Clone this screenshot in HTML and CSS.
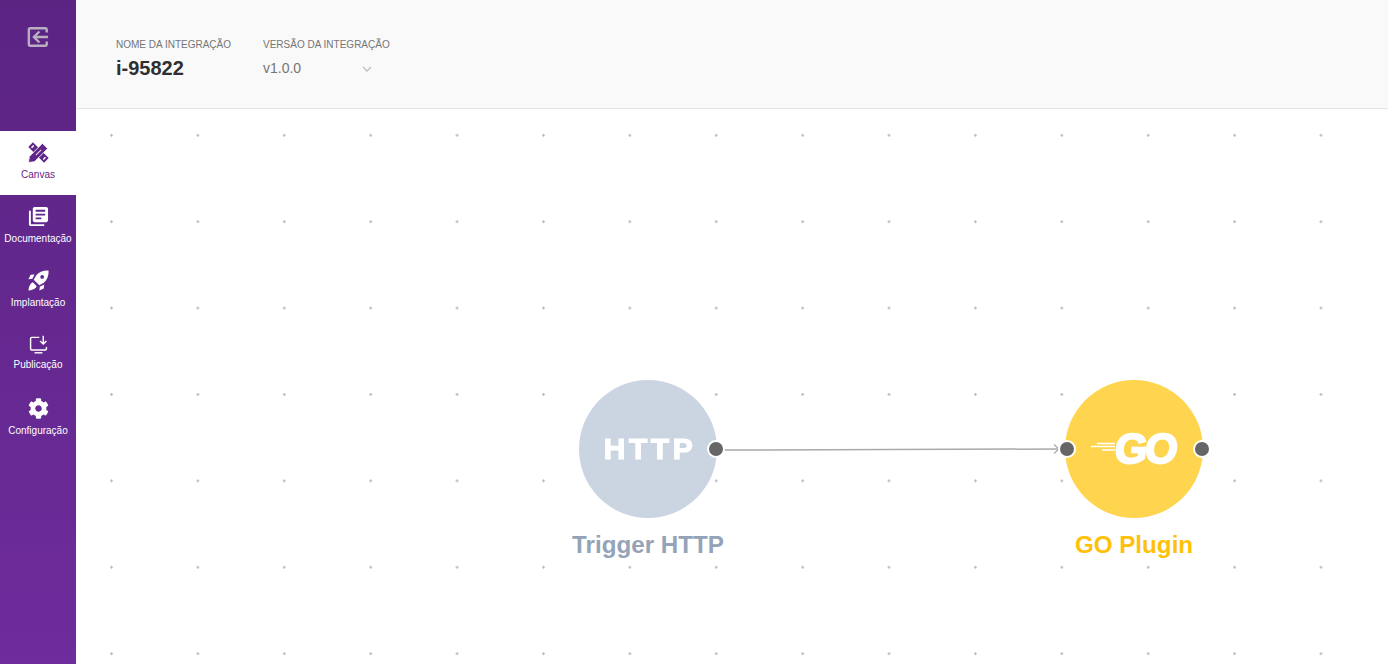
FILE: index.html
```html
<!DOCTYPE html>
<html lang="pt-BR">

<head>
    <meta charset="UTF-8">
    <meta name="viewport" content="width=device-width, initial-scale=1.0">
    <title>Canvas</title>
    <link rel="stylesheet" href="styles.css">
</head>

<body>
    <aside class="sidebar">
        <div class="sidebar-top">
            <svg class="back-icon" viewBox="0 0 24 24" fill="none" stroke="currentColor" stroke-width="2.600">
                <path d="M21.500 7V4a1.500 1.500 0 0 0-1.500-1.500H3.500A1.500 1.500 0 0 0 2 4v16a1.500 1.500 0 0 0 1.500 1.500H20a1.500 1.500 0 0 0 1.500-1.500v-3" />
                <path d="M23 12H8M13.500 6 7.500 12l6 6" />
            </svg>
        </div>
        <nav class="menu">
            <a class="menu-item active">
                <svg class="menu-icon" viewBox="0 0 24 24">
                    <path d="M3 3 21 21" stroke="currentColor" stroke-width="7.500" />
                    <path d="M4 6.500 6.500 4M17.500 20 20 17.500" stroke="#fff" stroke-width="1.800" />
                    <path d="M.5 23.500 1.500 16.500 16.500 1.500 22.500 7.500 7.500 22.500z" fill="currentColor" stroke="#fff" stroke-width="1" />
                    <path d="M9 15 15 9" stroke="#e6dcee" stroke-width="1.200" />
                </svg>
                <span>Canvas</span>
            </a>
            <a class="menu-item">
                <svg class="menu-icon" viewBox="1 1 22 22" fill="currentColor">
                    <path d="M4 6H2v14c0 1.100.9 2 2 2h14v-2H4V6zm16-4H8c-1.100 0-2 .9-2 2v12c0 1.100.9 2 2 2h12c1.100 0 2-.9 2-2V4c0-1.100-.9-2-2-2zm-1 9H9V9h10v2zm-4 4H9v-2h6v2zm4-8H9V5h10v2z" />
                </svg>
                <span>Documentação</span>
            </a>
            <a class="menu-item">
                <svg class="menu-icon" viewBox="0 0 24 24" fill="currentColor">
                    <path fill-rule="evenodd" d="M23.500.5c-6-.3-11 1.500-14 5.500L6.500 11 13 17.500l5-3c4-3 5.800-8 5.500-14zM16.200 5.700a2.200 2.200 0 1 1 0 4.400 2.200 2.200 0 0 1 0-4.400z" />
                    <path d="M7.500 5 3 5.500.5 10.500l4.500-.5zM18.500 16.500l-.5 4.500-5 2.500.5-4.500zM5.500 14c-2.500 1-4.500 4-5 9.500 5.500-.5 8.500-2.500 9.500-5z" />
                </svg>
                <span>Implantação</span>
            </a>
            <a class="menu-item publish">
                <svg class="menu-icon" viewBox="0 0 24 24" fill="none" stroke="currentColor" stroke-width="1.800">
                    <path d="M13 3H3.500A1.500 1.500 0 0 0 2 4.500v13A1.500 1.500 0 0 0 3.500 19h17a1.500 1.500 0 0 0 1.500-1.500V15" />
                    <path d="M7 22.500h10" />
                    <path d="M18 1v9.500M14 7.500l4 4 4-4" />
                </svg>
                <span>Publicação</span>
            </a>
            <a class="menu-item">
                <svg class="menu-icon" viewBox="0 0 512 512" fill="currentColor">
                    <path d="M487.4 315.7l-42.6-24.6c4.3-23.2 4.3-47 0-70.2l42.6-24.6c4.9-2.8 7.1-8.6 5.5-14-11.1-35.6-30-67.8-54.7-94.6-3.8-4.100-10-5.100-14.800-2.300L380.800 110c-17.900-15.400-38.500-27.300-60.800-35.100V25.800c0-5.600-3.900-10.500-9.400-11.700-36.700-8.200-74.300-7.800-109.200 0-5.500 1.200-9.400 6.100-9.400 11.700V75c-22.200 7.900-42.800 19.800-60.800 35.100L88.700 85.500c-4.900-2.800-11-1.900-14.800 2.300-24.700 26.700-43.600 58.900-54.700 94.600-1.700 5.400.6 11.200 5.500 14L67.300 221c-4.300 23.200-4.300 47 0 70.200l-42.600 24.600c-4.900 2.800-7.100 8.600-5.500 14 11.100 35.600 30 67.800 54.700 94.600 3.800 4.100 10 5.100 14.800 2.300l42.600-24.600c17.900 15.400 38.500 27.300 60.800 35.100v49.200c0 5.600 3.900 10.500 9.400 11.700 36.700 8.200 74.300 7.800 109.200 0 5.500-1.200 9.400-6.100 9.400-11.700v-49.200c22.200-7.900 42.800-19.800 60.800-35.100l42.600 24.600c4.900 2.800 11 1.900 14.800-2.300 24.700-26.700 43.600-58.900 54.700-94.600 1.500-5.500-.7-11.300-5.600-14.100zM256 336c-44.100 0-80-35.900-80-80s35.900-80 80-80 80 35.900 80 80-35.900 80-80 80z" />
                </svg>
                <span>Configuração</span>
            </a>
        </nav>
    </aside>

    <div class="main">
        <header class="topbar">
            <div class="field field-name">
                <label>NOME DA INTEGRAÇÃO</label>
                <strong>i-95822</strong>
            </div>
            <div class="field field-version">
                <label>VERSÃO DA INTEGRAÇÃO</label>
                <div class="version-select">
                    <span>v1.0.0</span>
                    <svg class="chevron" viewBox="0 0 10 6" fill="none" stroke="currentColor" stroke-width="1.300">
                        <path d="M1 1l4 4 4-4" />
                    </svg>
                </div>
            </div>
        </header>

        <section class="canvas">
            <svg class="edge" width="360" height="16" viewBox="0 0 360 16" fill="none">
                <path class="edge-line" d="M4 9 339 8" />
                <path class="edge-head" d="M334 3.500l5 4.500-5 4.500" />
            </svg>

            <div class="node node-http">
                <div class="circle">
                    <span class="http-text">HTTP</span>
                </div>
                <div class="node-title">Trigger HTTP</div>
                <i class="port port-out"></i>
            </div>

            <div class="node node-go">
                <div class="circle">
                    <div class="go-logo">
                        <svg class="go-lines" viewBox="0 0 24 12" fill="none" stroke="#fff" stroke-width="1.300">
                            <path d="M6 1.500h18M0 4.500h24M11 8h13" />
                        </svg>
                        <span class="go-text">GO</span>
                    </div>
                </div>
                <div class="node-title">GO Plugin</div>
                <i class="port port-in"></i>
                <i class="port port-out"></i>
            </div>
        </section>
    </div>
</body>

</html>
```

FILE: styles.css
```css
* {
    box-sizing: border-box;
}

html,
body {
    height: 100%;
}

body {
    margin: 0;
    display: flex;
    overflow: hidden;
    font-family: 'Liberation Sans', Arial, sans-serif;
    background: #fff;
}

.sidebar {
    width: 76px;
    flex-shrink: 0;
    background-image: linear-gradient(180deg, #5b2483, #6e2c9c);
}

.sidebar-top {
    height: 131px;
    padding-top: 26px;
    display: flex;
    justify-content: center;
}

.back-icon {
    width: 22px;
    height: 22px;
    color: #b9afc0;
}

.menu-item {
    height: 64px;
    padding-top: 11px;
    display: flex;
    flex-direction: column;
    align-items: center;
    color: #fff;
    font-size: 10px;
    line-height: 12px;
    white-space: nowrap;
}

.menu-item span {
    margin-top: 6px;
}

.menu-item.active {
    background: #fff;
    color: #5f2688;
}

.menu-icon {
    width: 21px;
    height: 21px;
}

.publish {
    padding-top: 12px;
}

.publish .menu-icon {
    width: 19px;
    height: 19px;
}

.publish span {
    margin-top: 5px;
}

.main {
    flex: 1;
    min-width: 0;
    display: flex;
    flex-direction: column;
}

.topbar {
    height: 109px;
    flex-shrink: 0;
    padding: 39px 0 0 40px;
    display: flex;
    gap: 32px;
    background: #f9f9f9;
    border-bottom: 1px solid #e5e5e5;
}

.field label {
    display: block;
    font-size: 10px;
    line-height: 12px;
    color: #757575;
}

.field strong {
    display: block;
    margin-top: 5px;
    font-size: 20px;
    line-height: 24px;
    color: #2f2f2f;
}

.version-select {
    width: 110px;
    margin-top: 5px;
    display: flex;
    align-items: center;
    justify-content: space-between;
    font-size: 14px;
    line-height: 24px;
    color: #757575;
}

.chevron {
    width: 10px;
    height: 6px;
    margin: 2px 1px 0 0;
    color: #bdbdbd;
}

.canvas {
    position: relative;
    flex: 1;
    background-image: radial-gradient(circle, #bcbcbc 1px, transparent 1.500px);
    background-size: 86.400px 86.400px;
    background-position: -7.700px -16.900px;
}

.edge {
    position: absolute;
    left: 644px;
    top: 332px;
}

.edge-line {
    stroke: #a9a9a9;
    stroke-width: 1.500;
}

.edge-head {
    stroke: #a9a9a9;
    stroke-width: 1.200;
}

.node {
    position: absolute;
    width: 138px;
    top: 271px;
}

.node-http {
    left: 503px;
}

.node-go {
    left: 989px;
}

.circle {
    width: 138px;
    height: 138px;
    border-radius: 50%;
    display: flex;
    align-items: center;
    justify-content: center;
}

.node-http .circle {
    background: #cbd5e1;
}

.node-go .circle {
    background: #ffd54f;
}

.node-title {
    margin: 12px -30px 0;
    text-align: center;
    font-size: 24.200px;
    line-height: 30px;
    font-weight: 700;
}

.node-http .node-title {
    color: #94a3b8;
}

.node-go .node-title {
    color: #ffc107;
}

.http-text {
    margin-left: 4px;
    font-size: 30px;
    font-weight: 700;
    letter-spacing: 3.500px;
    color: #fff;
    -webkit-text-stroke: 1.200px #fff;
    filter: blur(0.700px);
}

.go-logo {
    display: flex;
    align-items: center;
    margin-left: -2px;
    filter: blur(0.600px);
}

.go-lines {
    width: 24px;
    height: 12px;
    margin-top: -3px;
}

.go-text {
    display: block;
    font-size: 42px;
    line-height: 40px;
    font-weight: 700;
    letter-spacing: -2.500px;
    color: #fff;
    -webkit-text-stroke: 2px #fff;
    transform: skewX(-6deg);
}

.port {
    position: absolute;
    width: 18px;
    height: 18px;
    top: 60px;
    border-radius: 50%;
    background: #666;
    border: 2px solid #fff;
}

.port-in {
    left: -7px;
}

.port-out {
    right: -8px;
}
```
